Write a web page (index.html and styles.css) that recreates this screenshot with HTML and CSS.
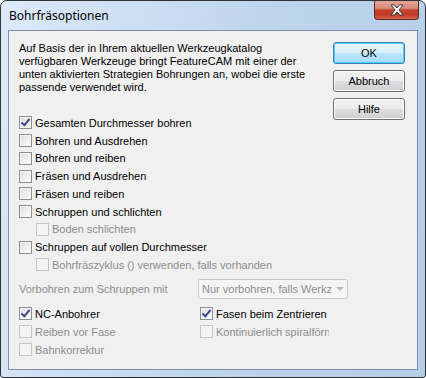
FILE: index.html
```html
<!doctype html>
<html>
<head>
    <title>Bohrfräsoptionen</title>
    <meta charset="utf-8">
    <link rel="stylesheet" href="styles.css">
</head>
<body>
    <div class="fenster">
        <!-- Titelleiste -->
        <div class="titelleiste">
            <span class="titel">Bohrfräsoptionen</span>
            <div class="schliessen">
                <svg width="16" height="12" viewBox="0 0 16 12">
                    <path d="M2 1 L5.5 1 L8 4 L10.5 1 L14 1 L10 6 L14 11 L10.5 11 L8 8 L5.5 11 L2 11 L6 6 Z" fill="#ffffff" stroke="#3b3b3b" stroke-width="1" stroke-linejoin="round"/>
                </svg>
            </div>
        </div>

        <!-- Inhalt -->
        <div class="inhalt">
            <div class="oben">
                <p class="hinweis">Auf Basis der in Ihrem aktuellen Werkzeugkatalog verfügbaren Werkzeuge bringt FeatureCAM mit einer der unten aktivierten Strategien Bohrungen an, wobei die erste passende verwendet wird.</p>
                <div class="knoepfe">
                    <button class="knopf standard">OK</button>
                    <button class="knopf">Abbruch</button>
                    <button class="knopf">Hilfe</button>
                </div>
            </div>

            <div class="liste">
                <label class="zeile"><span class="box an"></span>Gesamten Durchmesser bohren</label>
                <label class="zeile"><span class="box"></span>Bohren und Ausdrehen</label>
                <label class="zeile"><span class="box"></span>Bohren und reiben</label>
                <label class="zeile"><span class="box"></span>Fräsen und Ausdrehen</label>
                <label class="zeile"><span class="box"></span>Fräsen und reiben</label>
                <label class="zeile"><span class="box"></span>Schruppen und schlichten</label>
                <label class="zeile eingerueckt aus"><span class="box"></span>Boden schlichten</label>
                <label class="zeile"><span class="box"></span>Schruppen auf vollen Durchmesser</label>
                <label class="zeile eingerueckt aus"><span class="box"></span>Bohrfräszyklus () verwenden, falls vorhanden</label>
            </div>

            <div class="vorbohren">
                <span class="aus vorbohren-text">Vorbohren zum Schruppen mit</span>
                <div class="auswahl">
                    <span class="auswahl-text">Nur vorbohren, falls Werkz</span>
                    <span class="pfeil"></span>
                </div>
            </div>

            <div class="unten">
                <div class="spalte">
                    <label class="zeile"><span class="box an"></span>NC-Anbohrer</label>
                    <label class="zeile aus"><span class="box"></span>Reiben vor Fase</label>
                    <label class="zeile aus"><span class="box"></span>Bahnkorrektur</label>
                </div>
                <div class="spalte rechts">
                    <label class="zeile"><span class="box an"></span>Fasen beim Zentrieren</label>
                    <label class="zeile aus"><span class="box"></span>Kontinuierlich spiralförn</label>
                </div>
            </div>
        </div>
    </div>
</body>
</html>
```

FILE: styles.css
```css
body {
    margin: 0;
    background-color: #ffffff;
}
.fenster {
    width: 426px;
    height: 378px;
    box-sizing: border-box;
    border: 1px solid #2f3438;
    border-radius: 7px 7px 3px 3px;
    background: linear-gradient(100deg, #dce9f7 0%, #c9dcf1 35%, #bcd3ec 60%, #b6cfe9 100%);
    padding: 0 7px 7px 7px;
    display: flex;
    flex-direction: column;
    font-family: "Liberation Sans", Arial, sans-serif;
    font-size: 11px;
    color: #000000;
}
.titelleiste {
    height: 29px;
    display: flex;
    align-items: flex-start;
    justify-content: space-between;
}
.titel {
    font-family: "Noto Sans", sans-serif;
    font-size: 12px;
    margin-top: 6px;
    margin-left: 1px;
    color: #000000;
}
.schliessen {
    width: 45px;
    height: 19px;
    margin-right: -1px;
    box-sizing: border-box;
    border: 1px solid #5a2a25;
    border-top: none;
    border-radius: 0 0 4px 4px;
    background: linear-gradient(#e6a496 0%, #d98a7a 40%, #c5432e 50%, #c13a26 75%, #d8664c 100%);
    display: flex;
    align-items: center;
    justify-content: center;
}
.inhalt {
    flex: 1;
    background-color: #f0f0f0;
    border: 1px solid #7d8fa3;
    padding: 11px 12px 0 10px;
    display: flex;
    flex-direction: column;
    overflow: hidden;
}
.oben {
    height: 52px;
    display: flex;
    align-items: flex-start;
    justify-content: space-between;
}
.hinweis {
    margin: 0;
    width: 300px;
    line-height: 13px;
}
.knoepfe {
    display: flex;
    flex-direction: column;
    gap: 6px;
}
.knopf {
    width: 72px;
    height: 22px;
    border: 1px solid #707070;
    border-radius: 3px;
    background: linear-gradient(#f2f2f2 0%, #ebebeb 50%, #dddddd 51%, #cfcfcf 100%);
    box-shadow: inset 0 0 0 1px #fcfcfc;
    font-family: "Liberation Sans", Arial, sans-serif;
    font-size: 11px;
    color: #000000;
    padding: 0;
}
.standard {
    border-color: #3c7fb1;
    background: linear-gradient(#eaf6fd 0%, #d9f0fc 50%, #bee6fd 51%, #a7d9f5 100%);
    box-shadow: inset 0 0 0 1px #48d1fa;
}
.liste {
    margin-top: 20px;
    display: flex;
    flex-direction: column;
}
.zeile {
    height: 17.75px;
    display: flex;
    align-items: center;
    gap: 3px;
    white-space: nowrap;
}
.eingerueckt {
    padding-left: 17px;
}
.box {
    flex: none;
    width: 13px;
    height: 13px;
    box-sizing: border-box;
    border: 1px solid #8e8f8f;
    background: linear-gradient(135deg, #dcdcdc 0%, #f2f2f2 60%, #ffffff 100%);
    box-shadow: inset 0 0 0 1px #f4f4f4;
    position: relative;
}
.box.an::after {
    content: "";
    position: absolute;
    left: 3px;
    top: 0px;
    width: 3px;
    height: 7px;
    border: solid #3b4e82;
    border-width: 0 2px 2px 0;
    transform: rotate(40deg);
}
.aus {
    color: #8d8d8d;
}
.aus .box {
    border-color: #c5c5c5;
    background: #f4f4f4;
    box-shadow: none;
}
.vorbohren {
    margin-top: 5px;
    display: flex;
    align-items: center;
}
.vorbohren-text {
    width: 179px;
    white-space: nowrap;
}
.auswahl {
    width: 150px;
    height: 20px;
    box-sizing: border-box;
    border: 1px solid #c9c9c9;
    border-radius: 2px;
    background-color: #f4f4f4;
    color: #8d8d8d;
    display: flex;
    align-items: center;
    justify-content: space-between;
    padding: 0 6px 0 3px;
    overflow: hidden;
}
.auswahl-text {
    white-space: nowrap;
}
.pfeil {
    flex: none;
    width: 0;
    height: 0;
    margin-left: 4px;
    border-left: 4px solid transparent;
    border-right: 4px solid transparent;
    border-top: 4px solid #b8b8b8;
}
.unten {
    margin-top: 6px;
    display: flex;
}
.unten .zeile {
    height: 18px;
}
.spalte {
    width: 181px;
    display: flex;
    flex-direction: column;
}
.rechts {
    width: 129px;
    overflow: hidden;
}
```
